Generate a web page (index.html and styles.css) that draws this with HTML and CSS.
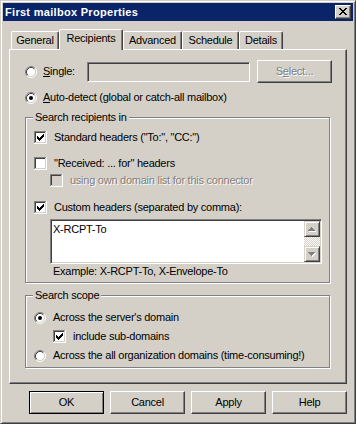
FILE: index.html
```html
<!DOCTYPE html>
<html>
<head>
<meta charset="utf-8">
<title>First mailbox Properties</title>
<link rel="stylesheet" href="styles.css">
</head>
<body>
<svg class="defs" width="0" height="0" aria-hidden="true">
  <defs>
    <symbol id="radio" viewBox="0 0 12 12">
      <circle cx="6" cy="6" r="4.5" fill="#fff"/>
      <path d="M2.11 9.89A5.5 5.5 0 0 1 9.89 2.11" fill="none" stroke="#808080"/>
      <path d="M9.89 2.11A5.5 5.5 0 0 1 2.11 9.89" fill="none" stroke="#fff"/>
      <path d="M2.82 9.18A4.5 4.5 0 0 1 9.18 2.82" fill="none" stroke="#404040"/>
      <path d="M9.18 2.82A4.5 4.5 0 0 1 2.82 9.18" fill="none" stroke="#d4d0c8"/>
    </symbol>
    <symbol id="dot" viewBox="0 0 12 12">
      <circle cx="6" cy="6" r="2" fill="#000"/>
    </symbol>
    <symbol id="cbframe" viewBox="0 0 13 13">
      <path shape-rendering="crispEdges" fill="#fff" d="M0 0h13v13H0z"/>
      <path shape-rendering="crispEdges" fill="#808080" d="M0 0h12v1H1v11H0z"/>
      <path shape-rendering="crispEdges" fill="#404040" d="M1 1h10v1H2v9H1z"/>
      <path shape-rendering="crispEdges" fill="#d4d0c8" d="M11 1h1v11H1v-1h10z"/>
      <path shape-rendering="crispEdges" fill="#fff" d="M2 2h9v9H2z"/>
    </symbol>
    <symbol id="cbframe-dis" viewBox="0 0 13 13">
      <path shape-rendering="crispEdges" fill="#fff" d="M0 0h13v13H0z"/>
      <path shape-rendering="crispEdges" fill="#808080" d="M0 0h12v1H1v11H0z"/>
      <path shape-rendering="crispEdges" fill="#404040" d="M1 1h10v1H2v9H1z"/>
      <path shape-rendering="crispEdges" fill="#d4d0c8" d="M11 1h1v11H1v-1h10z"/>
      <path shape-rendering="crispEdges" fill="#d4d0c8" d="M2 2h9v9H2z"/>
    </symbol>
    <symbol id="tick" viewBox="0 0 13 13">
      <path shape-rendering="crispEdges" fill="#000" d="M9 3h1v1H9zM8 4h2v1H8zM3 5h1v1H3zM7 5h3v1H7zM3 6h2v1H3zM6 6h3v1H6zM3 7h5v1H3zM4 8h3v1H4zM5 9h1v1H5z"/>
    </symbol>
    <symbol id="arrow-up" viewBox="0 0 8 5">
      <path shape-rendering="crispEdges" fill="#fff" d="M4 1h1v1H4zM3 2h3v1H3zM2 3h5v1H2zM1 4h7v1H1z"/>
      <path shape-rendering="crispEdges" fill="#808080" d="M3 0h1v1H3zM2 1h3v1H2zM1 2h5v1H1zM0 3h7v1H0z"/>
    </symbol>
    <symbol id="arrow-down" viewBox="0 0 8 5">
      <path shape-rendering="crispEdges" fill="#fff" d="M1 1h7v1H1zM2 2h5v1H2zM3 3h3v1H3zM4 4h1v1H4z"/>
      <path shape-rendering="crispEdges" fill="#808080" d="M0 0h7v1H0zM1 1h5v1H1zM2 2h3v1H2zM3 3h1v1H3z"/>
    </symbol>
  </defs>
</svg>

<div class="window">
  <div class="titlebar">
    <span class="title">First mailbox Properties</span>
    <button class="close-btn" type="button" aria-label="Close">
      <svg class="close-x" width="8" height="7" viewBox="0 0 8 7"><path shape-rendering="crispEdges" d="M0 0h2v1H0zM6 0h2v1H6zM1 1h2v1H1zM5 1h2v1H5zM2 2h4v1H2zM3 3h2v1H3zM2 4h4v1H2zM1 5h2v1H1zM5 5h2v1H5zM0 6h2v1H0zM6 6h2v1H6z"/></svg>
    </button>
  </div>

  <div class="tabs">
    <div class="tab tab-general">General</div>
    <div class="tab tab-recipients tab-active">Recipients</div>
    <div class="tab tab-advanced">Advanced</div>
    <div class="tab tab-schedule">Schedule</div>
    <div class="tab tab-details">Details</div>
  </div>

  <div class="panel">
    <div class="row row-single">
      <svg class="radio" viewBox="0 0 12 12"><use href="#radio"/></svg>
      <span class="label single-label"><u>S</u>ingle:</span>
      <div class="textbox"></div>
      <button class="btn btn-select" type="button" disabled><span class="dis">S<u>e</u>lect...</span></button>
    </div>
    <div class="row row-auto">
      <svg class="radio" viewBox="0 0 12 12"><use href="#radio"/><use href="#dot"/></svg>
      <span class="label"><u>A</u>uto-detect (global or catch-all mailbox)</span>
    </div>

    <fieldset class="group group-recipients">
      <legend>Search recipients in</legend>
      <div class="opt opt-standard">
        <svg class="cb" viewBox="0 0 13 13"><use href="#cbframe"/><use href="#tick"/></svg>
        <span class="opt-label">Standard headers ("To:", "CC:")</span>
      </div>
      <div class="opt opt-received">
        <svg class="cb" viewBox="0 0 13 13"><use href="#cbframe"/></svg>
        <span class="opt-label">"Received: ... for" headers</span>
      </div>
      <div class="opt opt-owndomain">
        <svg class="cb" viewBox="0 0 13 13"><use href="#cbframe-dis"/></svg>
        <span class="opt-label dis">using own domain list for this connector</span>
      </div>
      <div class="opt opt-custom">
        <svg class="cb" viewBox="0 0 13 13"><use href="#cbframe"/><use href="#tick"/></svg>
        <span class="opt-label">Custom headers (separated by comma):</span>
      </div>
      <div class="memo">
        <div class="memo-text">X-RCPT-To</div>
        <div class="scrollbar">
          <div class="sb-btn"><svg class="sb-arrow" viewBox="0 0 8 5"><use href="#arrow-up"/></svg></div>
          <div class="sb-track"></div>
          <div class="sb-btn"><svg class="sb-arrow" viewBox="0 0 8 5"><use href="#arrow-down"/></svg></div>
        </div>
      </div>
      <div class="example">Example: X-RCPT-To, X-Envelope-To</div>
    </fieldset>

    <fieldset class="group group-scope">
      <legend>Search scope</legend>
      <div class="opt opt-server">
        <svg class="radio" viewBox="0 0 12 12"><use href="#radio"/><use href="#dot"/></svg>
        <span class="opt-label">Across the server's domain</span>
      </div>
      <div class="opt opt-sub">
        <svg class="cb" viewBox="0 0 13 13"><use href="#cbframe"/><use href="#tick"/></svg>
        <span class="opt-label">include sub-domains</span>
      </div>
      <div class="opt opt-all">
        <svg class="radio" viewBox="0 0 12 12"><use href="#radio"/></svg>
        <span class="opt-label">Across the all organization domains (time-consuming!)</span>
      </div>
    </fieldset>
  </div>

  <div class="buttons">
    <button class="btn btn-default" type="button">OK</button>
    <button class="btn" type="button">Cancel</button>
    <button class="btn" type="button">Apply</button>
    <button class="btn" type="button">Help</button>
  </div>
</div>
</body>
</html>
```

FILE: styles.css
```css
* { box-sizing: border-box; }
html, body { margin: 0; padding: 0; }
body {
  background: #d4d0c8;
  font-family: "Liberation Sans", Arial, sans-serif;
  font-size: 11px;
  line-height: 13px;
  letter-spacing: -0.25px;
  color: #000;
}
.defs { position: absolute; width: 0; height: 0; overflow: hidden; }

.window {
  width: 356px;
  height: 424px;
  padding: 2px;
  background: #d4d0c8;
  border: 1px solid;
  border-color: #d4d0c8 #404040 #404040 #d4d0c8;
  box-shadow: inset 1px 1px 0 #fff, inset -1px -1px 0 #808080;
  display: flex;
  flex-direction: column;
}

/* title bar */
.titlebar {
  flex: none;
  height: 18px;
  background: #0a246a;
  display: flex;
  align-items: center;
  padding: 0 2px;
}
.title {
  flex: 1;
  color: #fff;
  font-weight: bold;
  letter-spacing: 0.3px;
  padding-top: 1px;
  white-space: nowrap;
}
.close-btn {
  flex: none;
  width: 16px;
  height: 14px;
  margin: 0;
  padding: 0 0 1px;
  background: #d4d0c8;
  border: 1px solid;
  border-color: #fff #404040 #404040 #fff;
  box-shadow: inset -1px -1px 0 #808080;
  display: flex;
  align-items: center;
  justify-content: center;
}
.close-x { display: block; fill: #000; }

/* tabs */
.tabs {
  flex: none;
  display: flex;
  align-items: flex-end;
  height: 20px;
  margin: 8px 6px 0;
  padding-left: 2px;
}
.tab {
  flex: none;
  height: 18px;
  padding-top: 2px;
  text-align: center;
  white-space: nowrap;
  border: 1px solid;
  border-bottom: 0;
  border-color: #fff #404040 transparent #fff;
  border-radius: 2px 2px 0 0;
  box-shadow: inset -1px 0 0 #808080;
}
.tab-active {
  height: 21px;
  margin-bottom: -1px;
  position: relative;
  z-index: 1;
  background: #d4d0c8;
}
.tab-general { width: 48px; }
.tab-recipients { width: 64px; }
.tab-advanced { width: 59px; }
.tab-schedule { width: 57px; }
.tab-details { width: 44px; }

/* panel */
.panel {
  flex: none;
  margin: 0 6px;
  padding: 10px 14px 15px 15px;
  border: 1px solid;
  border-color: #fff #404040 #404040 #fff;
  box-shadow: inset -1px -1px 0 #808080;
}

.row { display: flex; align-items: center; }
.row-single { height: 23px; }
.row-auto { height: 15px; margin-top: 7px; }
.radio { flex: none; display: block; width: 12px; height: 12px; }
.label { margin-left: 6px; white-space: nowrap; }
.single-label { flex: none; width: 44px; }
.textbox {
  flex: none;
  width: 163px;
  height: 20px;
  margin-top: 1px;
  background: #d4d0c8;
  border: 1px solid;
  border-color: #808080 #fff #fff #808080;
  box-shadow: inset 1px 1px 0 #404040, inset -1px -1px 0 #d4d0c8;
}

.dis { color: #808080; text-shadow: 1px 1px 0 #fff; }

/* buttons */
.btn {
  flex: none;
  width: 75px;
  height: 23px;
  margin: 0;
  padding: 0;
  font: inherit;
  letter-spacing: inherit;
  color: #000;
  background: #d4d0c8;
  border: 1px solid;
  border-color: #fff #404040 #404040 #fff;
  box-shadow: inset -1px -1px 0 #808080;
}
.btn-select { margin-left: 7px; }
.btn-default {
  border-color: #000;
  box-shadow: inset 1px 1px 0 #fff, inset -1px -1px 0 #808080;
}
.buttons {
  flex: none;
  display: flex;
  justify-content: flex-end;
  gap: 6px;
  margin: 7px 6px 0 0;
}

/* group boxes */
.group {
  display: block;
  min-width: 0;
  margin: 6px 2px 0 0;
  padding: 0 0 4px 8px;
  border: 1px solid #808080;
  box-shadow: inset 1px 1px 0 #fff, 1px 1px 0 #fff;
}
.group legend {
  padding: 0 2px;
  margin-left: -1px;
  line-height: 13px;
  background: #d4d0c8;
}
.group-scope { padding-bottom: 5px; }

.opt { display: flex; align-items: center; height: 13px; }
.cb { flex: none; display: block; width: 13px; height: 13px; }
.opt-label { margin-left: 7px; white-space: nowrap; }

.opt-standard { margin-top: 7px; }
.opt-received { margin-top: 13px; }
.opt-owndomain { margin-top: 4px; margin-left: 16px; }
.opt-custom { margin-top: 14px; }
.opt-server { margin-top: 9px; }
.opt-sub { margin-top: 6px; margin-left: 19px; }
.opt-all { margin-top: 6px; }

.memo {
  display: flex;
  width: 272px;
  height: 45px;
  margin: 5px 0 0 16px;
  padding: 1px;
  background: #fff;
  border: 1px solid;
  border-color: #808080 #fff #fff #808080;
  box-shadow: inset 1px 1px 0 #404040, inset -1px -1px 0 #d4d0c8;
}
.memo-text { flex: 1; padding: 2px 0 0 1px; }
.scrollbar { flex: none; width: 16px; display: flex; flex-direction: column; }
.sb-btn {
  flex: none;
  height: 16px;
  background: #d4d0c8;
  border: 1px solid;
  border-color: #d4d0c8 #404040 #404040 #d4d0c8;
  box-shadow: inset 1px 1px 0 #fff, inset -1px -1px 0 #808080;
  display: flex;
  align-items: center;
  justify-content: center;
}
.sb-arrow { display: block; width: 8px; height: 5px; }
.sb-track {
  flex: 1;
  background: repeating-conic-gradient(#fff 0 25%, #d4d0c8 0 50%) 0 0 / 2px 2px;
}
.example { margin: 1px 0 0 19px; white-space: nowrap; }
```
